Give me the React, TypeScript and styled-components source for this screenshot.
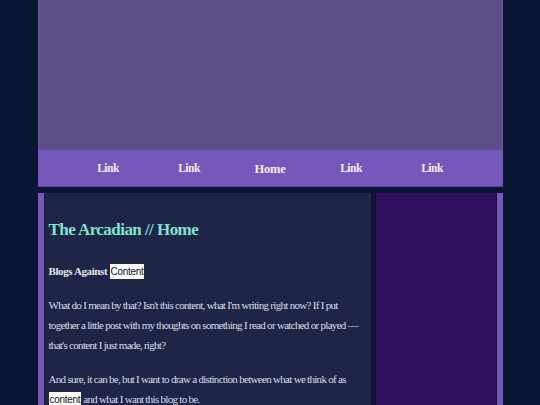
import React from 'react';
import styled, { createGlobalStyle } from 'styled-components';

const GlobalStyle = createGlobalStyle`
	html, body {
		margin: 0;
		padding: 0;
		background-color: #0b1534;
	}
	body {
		font-family: 'Liberation Serif', 'DejaVu Serif', serif;
		color: #dcdbe6;
	}
`;

const Page = styled.div`
	width: 465px;
	margin: 0 auto;
`;

const Banner = styled.header`
	height: 150px;
	background-color: #5d4e8a;
	box-shadow: inset 1px 0 0 #66589a, inset -1px 0 0 #66589a;
`;

const Nav = styled.nav`
	height: 36px;
	background-color: #7657bb;
	border-bottom: 1px solid #5e449e;
	display: grid;
	grid-template-columns: repeat(5, 81px);
	justify-content: center;
	align-items: center;
`;

const NavLink = styled.a<{ $current?: boolean }>`
	text-align: center;
	color: #f3eefa;
	font-weight: bold;
	text-decoration: none;
	font-size: ${(props) => (props.$current ? '12.5px' : '11.5px')};
	letter-spacing: ${(props) => (props.$current ? '-0.2px' : '-0.5px')};
	padding-top: ${(props) => (props.$current ? '2px' : '0')};
`;

const Main = styled.div`
	display: flex;
	gap: 4px;
	margin-top: 6px;
	min-height: 260px;
`;

const Content = styled.main`
	flex-shrink: 0;
	width: 317px;
	background-color: #1e2546;
	border-left: 6px solid #7657bb;
	box-shadow: inset 1px 0 0 #141a3c;
	padding: 0 5px;
`;

const Sidebar = styled.aside`
	flex: 1;
	background-color: #2f0f5e;
	border-right: 6px solid #7657bb;
	box-shadow: inset -1px 0 0 #1d0a44, inset 1px 0 0 #1d0a44;
`;

const Title = styled.h1`
	margin: 27px 0 21px;
	font-size: 17px;
	line-height: 20px;
	letter-spacing: -0.55px;
	color: #7ee3cf;
	font-weight: bold;
`;

const PostTitle = styled.h2`
	margin: 0 0 13px;
	font-size: 11px;
	line-height: 20px;
	letter-spacing: -0.4px;
	font-weight: bold;
	color: #e6e5ee;
`;

const Paragraph = styled.p`
	margin: 0 0 14px;
	font-size: 11px;
	line-height: 20px;
	letter-spacing: -0.7px;
	color: #dcdbe6;
`;

const Highlight = styled.span`
	font-family: 'Liberation Sans', 'DejaVu Sans', sans-serif;
	font-weight: normal;
	font-size: 10px;
	letter-spacing: -0.3px;
	background-color: #ffffff;
	color: #111111;
	padding: 2px 1px;
`;

export default function App() {
	return (
		<>
			<GlobalStyle />
			<Page>
				<Banner />
				<Nav>
					<NavLink>Link</NavLink>
					<NavLink>Link</NavLink>
					<NavLink $current>Home</NavLink>
					<NavLink>Link</NavLink>
					<NavLink>Link</NavLink>
				</Nav>
				<Main>
					<Content>
						<Title>The Arcadian // Home</Title>
						<PostTitle>
							Blogs Against <Highlight>Content</Highlight>
						</PostTitle>
						<Paragraph>
							What do I mean by that? Isn't this content, what I'm writing right now? If I put
							together a little post with my thoughts on something I read or watched or played —
							that's content I just made, right?
						</Paragraph>
						<Paragraph>
							And sure, it can be, but I want to draw a distinction between what we think of as{' '}
							<Highlight>content</Highlight> and what I want this blog to be.
						</Paragraph>
					</Content>
					<Sidebar />
				</Main>
			</Page>
		</>
	);
}
